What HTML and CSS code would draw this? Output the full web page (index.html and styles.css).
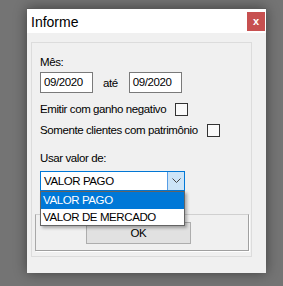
FILE: index.html
```html
<!DOCTYPE html>
<html>
<head>
<meta charset="utf-8">
<link rel="stylesheet" href="styles.css">
</head>
<body>
<div class="window">
  <div class="titlebar">
    <span class="title">Informe</span>
    <span class="close">x</span>
  </div>
  <div class="client">
    <div class="frame">
      <div class="label l-mes">Mês:</div>
      <div class="row-dates">
        <div class="input">09/2020</div>
        <span class="ate">até</span>
        <div class="input">09/2020</div>
      </div>
      <div class="check-row r1"><span>Emitir com ganho negativo</span><span class="box"></span></div>
      <div class="check-row r2"><span>Somente clientes com patrimônio</span><span class="box"></span></div>
      <div class="label l-usar">Usar valor de:</div>
      <div class="combo-wrap">
        <div class="combo">
          <span class="combo-text">VALOR PAGO</span>
          <span class="combo-btn"><svg width="9" height="6" viewBox="0 0 9 6"><path d="M0.5 0.5 L4.5 4.5 L8.5 0.5" fill="none" stroke="#444" stroke-width="1"/></svg></span>
        </div>
        <div class="dropdown">
          <div class="item sel">VALOR PAGO</div>
          <div class="item">VALOR DE MERCADO</div>
        </div>
      </div>
      <div class="inner">
        <div class="btn">OK</div>
      </div>
    </div>
  </div>
</div>
</body>
</html>
```
FILE: styles.css
```css
html, body { margin: 0; padding: 0; }
body {
  width: 283px; height: 286px; overflow: hidden;
  background: #747474;
  font-family: "Segoe UI", "Liberation Sans", Arial, sans-serif;
  font-size: 11.5px; color: #000;
  letter-spacing: -0.4px;
}
.window {
  position: relative;
  margin: 8px 0 0 27px;
  width: 239px; height: 265px;
  background: #f0f0f0;
  box-shadow: 0 0 12px rgba(0,0,0,0.45);
  border-top: 1px solid #5a5a5a;
  box-sizing: border-box;
}
.titlebar {
  height: 24px; background: #fff;
  display: flex; align-items: center; justify-content: space-between;
}
.title { font-size: 14px; margin-left: 4px; margin-top: 1px; letter-spacing: 0; }
.close {
  width: 18px; height: 19px; margin-right: 1px; margin-top: 3px; align-self: flex-start;
  background: #c75050; color: #fff; font-weight: bold; font-size: 11px; letter-spacing: 0;
  display: flex; align-items: center; justify-content: center; line-height: 1;
}
.client { padding: 9px 14px 0 4px; }
.frame {
  position: relative;
  height: 215px; box-sizing: border-box;
  border: 1px solid #dcdcdc;
  padding: 12px 0 0 8px;
}
.label { height: 15px; line-height: 15px; }
.row-dates { display: flex; align-items: center; margin-top: 2px; height: 21px; }
.input {
  width: 53px; height: 21px; box-sizing: border-box;
  border: 1px solid #7a7a7a; background: #fff;
  padding-left: 3px; line-height: 19px;
}
.ate { margin: 0 11px 0 10px; }
.check-row { display: flex; align-items: center; height: 13px; line-height: 13px; }
.r1 { margin-top: 10px; }
.r2 { margin-top: 8px; }
.check-row .box {
  width: 13px; height: 13px; box-sizing: border-box;
  border: 1px solid #333; background: #fafafa; margin-left: 9px;
}
.l-usar { margin-top: 14px; }
.combo-wrap { position: relative; margin-top: 5px; width: 145px; }
.combo {
  height: 20px; box-sizing: border-box;
  border: 1px solid #0078d7; background: #fff;
  display: flex; align-items: stretch;
}
.combo-text { flex: 1; padding-left: 3px; line-height: 18px; }
.combo-btn {
  width: 16px; background: #cce4f7; border-left: 1px solid #569de5;
  display: flex; align-items: center; justify-content: center;
}
.dropdown {
  position: absolute; left: 0; top: 20px; z-index: 2;
  width: 145px; box-sizing: border-box;
  border: 1px solid #646464; background: #fff;
  box-shadow: 2px 2px 3px rgba(0,0,0,0.3);
}
.item { height: 16px; line-height: 16px; padding-left: 2px; }
.item.sel { background: #0078d7; color: #fff; height: 17px; line-height: 17px; }
.inner {
  margin: 23px 0 0 -5px;
  width: 214px; height: 37px; box-sizing: border-box;
  border: 1px solid #a0a0a0; border-top-color: #d0d0d0; border-left-color: #a8a8a8;
  box-shadow: 1px 1px 0 #fff;
  padding: 7px 0 0 50px;
}
.btn {
  width: 105px; height: 22px; box-sizing: border-box;
  background: #e1e1e1; border: 1px solid #adadad;
  text-align: center; line-height: 20px;
}
```
